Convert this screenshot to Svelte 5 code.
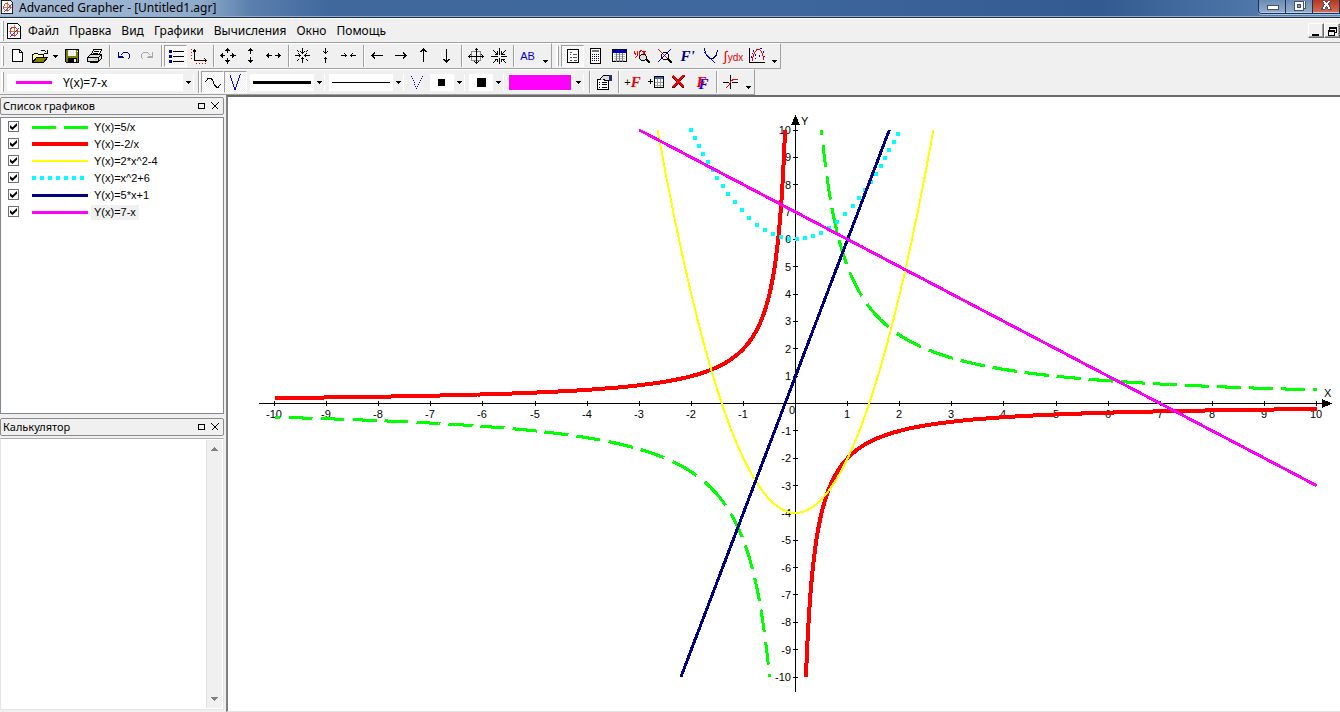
<script lang="ts">
    type Shape = { d: string; s?: string; f?: string; w?: number };

    const K = '#000';
    const N = '#000080';
    const R = '#f00000';

    const icons: Record<string, Shape[]> = {
        doc: [{ d: 'M3.5 1.5h7l3 3v9h-10z', s: K, f: '#fff' }, { d: 'M10.5 1.5v3h3', s: K }],
        open: [
            { d: 'M.5 14.5v-8h1l1-1h3l1 1h5v3', s: K, f: '#ffff99' },
            { d: 'M.5 14.5l4-5h11l-4 5z', s: K, f: '#808000' },
            { d: 'M8.5 3.5l1-1h3l2 2M15.5 2v3.5h-3.5', s: K }
        ],
        save: [
            { d: 'M1.5 1.5h13v13h-12l-1-1z', s: K, f: '#808000' },
            { d: 'M4 2h8v6h-8z', f: '#f0f0f0' },
            { d: 'M4 10h9v5h-9z', f: K },
            { d: 'M10 11h2v3h-2z', f: '#f0f0f0' },
            { d: 'M13 3h1v1h-1z', f: '#fff' }
        ],
        print: [
            { d: 'M4.5 6.5l2-5h8l-2 5', s: K, f: '#fff' },
            { d: 'M7 3.5h5M6 5.5h5', s: K },
            { d: 'M.5 9.5l3-3h11l-3 3zM.5 9.5h11v4h-11zM11.5 9.5l3-3v4l-3 3', s: K, f: '#dddddd' },
            { d: 'M2.5 14.5h8l3-3', s: K },
            { d: 'M7 11h3v1h-3z', f: '#d0c000' }
        ],
        undo: [{ d: 'M2.5 4v6M3 9.5h5M3 8.5h4M4.5 7.5l3-3h4l2 2v3l-2 2', s: N }],
        redo: [{ d: 'M13.5 4v6M13 9.5h-5M13 8.5h-4M11.5 7.5l-3-3h-4l-2 2v3l2 2', s: '#a8a8a8' }],
        list: [
            { d: 'M1 2h3v3h-3zM1 7h3v3h-3zM1 12h3v3h-3z', f: N },
            { d: 'M5 3.5h11M5 8.5h11M5 13.5h11', s: K }
        ],
        axes: [
            { d: 'M3.5 1v11M3 12.5h13M2 3.5h3M1.5 3.5l2-2l2 2M13.5 10.5l2 2l-2 2', s: K },
            { d: 'M0 1h1v1h-1zM0 4h1v1h-1zM0 7h1v1h-1zM0 10h1v1h-1zM5 15h1v1h-1zM8 15h1v1h-1zM11 15h1v1h-1zM14 15h1v1h-1z', f: R }
        ],
        grow: [{ d: 'M7.5 0v5M7.5 10v6M0 7.5h5M10 7.5h6M5.5 3l2-2l2 2M5.5 12l2 2l2-2M3 5.5l-2 2l2 2M12 5.5l2 2l-2 2', s: K }],
        growY: [{ d: 'M7.5 0v6M7.5 9v6M5.5 3l2-2l2 2M5.5 12l2 2l2-2', s: K }],
        growX: [{ d: 'M0 7.5h6M9 7.5h6M3 5.5l-2 2l2 2M12 5.5l2 2l-2 2', s: K }],
        shrink: [{ d: 'M7.5 0v6M7.5 9v6M0 7.5h6M9 7.5h6M5.5 3.5l2 2l2-2M5.5 11.5l2-2l2 2M3.5 5.5l2 2l-2 2M11.5 5.5l-2 2l2 2M2 2l2 2M13 2l-2 2M2 13l2-2M13 13l-2-2', s: K }],
        shrinkY: [{ d: 'M7.5 0v6M7.5 9v6M5.5 3.5l2 2l2-2M5.5 11.5l2-2l2 2', s: K }],
        shrinkX: [{ d: 'M0 7.5h6M9 7.5h6M3.5 5.5l2 2l-2 2M11.5 5.5l-2 2l2 2', s: K }],
        left: [{ d: 'M2 7.5h11M5 4.5l-3 3l3 3', s: K }],
        right: [{ d: 'M2 7.5h11M10 4.5l3 3l-3 3', s: K }],
        up: [{ d: 'M7.5 1v13M4.5 4l3-3l3 3', s: K }],
        down: [{ d: 'M7.5 1v13M4.5 11l3 3l3-3', s: K }],
        center: [
            { d: 'M3.5 3.5h9v9h-9z', s: '#888' },
            { d: 'M8.5 0v16M0 8.5h16M6.5 2.5l2-2l2 2M6.5 13.5l2 2l2-2M2.5 6.5l-2 2l2 2M13.5 6.5l2 2l-2 2', s: K }
        ],
        burst: [
            { d: 'M8.5 0v16M0 8.5h16M2 2l4 4M15 2l-4 4M2 15l4-4M15 15l-4-4', s: K },
            { d: 'M6.5 3v3h-3M10.5 3v3h3M6.5 14v-3h-3M10.5 14v-3h3', s: K },
            { d: 'M7 7h3v3h-3z', f: '#eee' }
        ],
        props: [
            { d: 'M2.5 1.5h11v13h-11z', s: K, f: '#fff' },
            { d: 'M5 4h2v1h-2zM5 6h1v1h-1zM8 6h4v1h-4zM5 9h2v1h-2zM8 9h4v1h-4zM5 12h2v1h-2zM9 12h3v1h-3z', f: '#555' }
        ],
        calc: [
            { d: 'M2.500 .5h10v15h-10z', s: K, f: '#fff' },
            { d: 'M4 2h7v2h-7z', f: '#777' },
            { d: 'M4 6h1v1h-1zM6 6h1v1h-1zM8 6h1v1h-1zM10 6h1v1h-1zM4 8h1v1h-1zM6 8h1v1h-1zM8 8h1v1h-1zM10 8h1v1h-1zM4 10h1v1h-1zM6 10h1v1h-1zM8 10h1v1h-1zM10 10h1v1h-1zM4 12h1v1h-1zM6 12h1v1h-1zM8 12h1v1h-1z', f: '#000090' },
            { d: 'M10 12h1v1h-1z', f: R }
        ],
        table: [
            { d: 'M1.5 1.5h14v12h-14z', s: K, f: '#fff' },
            { d: 'M2 2h13v3h-13z', f: '#0000c0' },
            { d: 'M3 6.5h11M3 8.5h11M3 10.5h11M3 12.5h11', s: '#bbb' },
            { d: 'M5.5 5v9M8.5 5v9M11.5 5v9', s: '#777' }
        ],
        lens: [
            { d: 'M0 3v1l2 3M3.5 3v4l-2 3M7.5 2l-2 2v4l2 2M8.5 3l3 4M11.5 3l-3 4', s: R },
            { d: 'M7.5 6.5h3l2 2v2l-2 2h-3l-2-2v-2z', s: K, f: '#ddd' },
            { d: 'M12 11l4 4', s: K, w: 2 }
        ],
        cross: [
            { d: 'M1 1l13 13', s: R },
            { d: 'M14 1l-13 13', s: '#0000e0' },
            { d: 'M6.5 4.5h3l2 2v3l-2 2h-3l-2-2v-3z', s: K },
            { d: 'M11 11l4 4', s: K, w: 2 }
        ],
        tangent: [
            { d: 'M1.5 0v2l2 5l3 3h4l3-3l1-5', s: N },
            { d: 'M1 4l11 11', s: '#0000ff' }
        ],
        regress: [
            { d: 'M.5 0v15M0 14.500h16', s: K },
            { d: 'M3.5 13v-3l2-5l3-4h2l2 3l2 5v3', s: R },
            { d: 'M2 8h1v2h-1zM4 2h1v2h-1zM6 6h1v2h-1zM11 0h2v1h-2zM14 3h1v2h-1zM10 7h1v2h-1zM15 8h1v1h-1zM6 10h1v1h-1zM3 5h1v1h-1z', f: '#0000e0' }
        ],
        wave: [{ d: 'M.5 8l3-4h2l2 2l2 5l2 2h2l2-3', s: K }],
        vee: [{ d: 'M2.5 1v2l1 2v1l1 2v1l1 2v1l1 2v1h1v-1l1-2v-1l1-2v-1l1-2v-1l1-2v-1l1-2', s: '#0000ff' }],
        veeDots: [{ d: 'M2 2h1v1h-1zM3 4h1v1h-1zM4 6h1v1h-1zM5 8h1v1h-1zM5 10h1v1h-1zM6 12h1v1h-1zM7 14h1v1h-1zM8 12h1v1h-1zM9 10h1v1h-1zM10 8h1v1h-1zM11 6h1v1h-1zM12 4h1v1h-1zM13 2h1v1h-1z', f: N }],
        hand: [
            { d: 'M1.5 5.5h11v10h-11z', s: K, f: '#fff' },
            { d: 'M3 8h1v1h-1zM6 8h5v1h-5zM3 10h1v1h-1zM6 10h5v1h-5zM3 13h1v1h-1zM6 13h5v1h-5z', f: K },
            { d: 'M4.5 5.5v-1l3-3h6v5h-4l-2-1', s: K, f: '#ddd' },
            { d: 'M13 1h3v6h-3z', f: '#203070' }
        ],
        addTable: [
            { d: 'M0 7.5h5M2.5 5v5', s: K },
            { d: 'M6.5 2.5h9v11h-9z', s: K, f: '#fff' },
            { d: 'M7 3h8v2h-8z', f: '#4060c0' },
            { d: 'M9.5 5v8M12.5 5v8M7 8.5h8M7 11.5h8', s: '#999' }
        ],
        remove: [
            { d: 'M2 3l11 11M13 2l-11 12', s: '#500', w: 2 },
            { d: 'M2 2l11 11M13 1l-11 12', s: R, w: 2 }
        ],
        trace: [
            { d: 'M7.5 1v14M0 8.5h6M9 8.5h6', s: K },
            { d: 'M3 14l3-3l2-4l3-2h4', s: R }
        ],
        app: [
            { d: 'M1.5 .5h10l3 3v12h-13z', s: K, f: '#fff' },
            { d: 'M8.5 2v12M3 8.5h11', s: '#d08020' },
            { d: 'M5.5 4.5h4l2 2v4l-2 2h-3l-2-2v-4z', s: '#e03030' },
            { d: 'M4 14l9-9', s: '#3030d0' }
        ]
    };

    const mainTools = [
        ['doc', 'open', 'save', 'print'],
        ['undo', 'redo'],
        ['list', 'axes'],
        ['grow', 'growY', 'growX'],
        ['shrink', 'shrinkY', 'shrinkX'],
        ['left', 'right', 'up', 'down'],
        ['center', 'burst']
    ];
    const calcTools = ['props', 'calc', 'table', 'lens', 'cross', 'F\'', 'tangent', 'ydx', 'regress'];

    const menu = ['Файл', 'Правка', 'Вид', 'Графики', 'Вычисления', 'Окно', 'Помощь'];

    type Graph = {
        name: string;
        color: string;
        width: number;
        dash?: [number, number];
        phase?: number;
        fn: (x: number) => number;
        ranges: [number, number][];
    };

    const r6 = Math.sqrt(7);
    const graphs: Graph[] = [
        { name: 'Y(x)=5/x', color: '#00ff00', width: 3, dash: [24, 8], phase: 18, fn: (x) => 5 / x, ranges: [[-10, -0.5], [0.5, 10]] },
        { name: 'Y(x)=-2/x', color: '#ff0000', width: 4, fn: (x) => -2 / x, ranges: [[-10, -0.2], [0.2, 10]] },
        { name: 'Y(x)=2*x^2-4', color: '#ffff00', width: 2, fn: (x) => 2 * x * x - 4, ranges: [[-r6, r6]] },
        { name: 'Y(x)=x^2+6', color: '#00ffff', width: 4, dash: [4, 4], fn: (x) => x * x + 6, ranges: [[-2, 2]] },
        { name: 'Y(x)=5*x+1', color: '#000080', width: 3, fn: (x) => 5 * x + 1, ranges: [[-2.2, 1.8]] },
        { name: 'Y(x)=7-x', color: '#ff00ff', width: 3, fn: (x) => 7 - x, ranges: [[-3, 10]] }
    ];

    let visible = $state(graphs.map(() => true));
    let selected = $state(5);

    const ox = 567.5;
    const oy = 306.5;
    const ux = 52.1;
    const uy = 27.35;

    // Dashes are counted along the longer of the two screen directions;
    // a dash as short as the pen is wide becomes an upright square dot.
    function curve(g: Graph) {
        let d = '';
        for (const [a, b] of g.ranges) {
            let run = g.phase ?? 0;
            let pen = false;
            let px = 0;
            let py = 0;
            const steps = g.dash ? 4000 : 400;
            for (let i = 0; i <= steps; i++) {
                const x = a + ((b - a) * i) / steps;
                const sx = ox + x * ux;
                const sy = oy - g.fn(x) * uy;
                if (i > 0) run += Math.max(Math.abs(sx - px), Math.abs(sy - py));
                const on = !g.dash || run % (g.dash[0] + g.dash[1]) < g.dash[0];
                if (g.dash?.[0] === g.width) {
                    if (on && !pen) d += `M${Math.round(sx) - 2} ${Math.round(sy)}h4`;
                } else if (on) {
                    d += `${pen ? 'L' : 'M'}${sx.toFixed(1)} ${sy.toFixed(1)}`;
                }
                pen = on;
                px = sx;
                py = sy;
            }
        }
        return d;
    }

    const ticks = Array.from({ length: 21 }, (_, i) => i - 10).filter((n) => n !== 0);
</script>

{#snippet icon(name: string)}
    <svg class="icon" viewBox="0 0 16 16" aria-hidden="true">
        {#each icons[name] as p}
            <path d={p.d} fill={p.f ?? 'none'} stroke={p.s ?? 'none'} stroke-width={p.w ?? 1} />
        {/each}
    </svg>
{/snippet}

{#snippet tri()}
    <svg class="tri" viewBox="0 0 5 3" aria-hidden="true"><path d="M0 0h5v1h-1v1h-1v1h-1v-1h-1v-1h-1z" /></svg>
{/snippet}

{#snippet paneHead(title: string)}
    <header class="pane-head">
        <h2>{title}</h2>
        <button aria-label="Закрепить"><svg viewBox="0 0 8 8"><path d="M1 1.5h6v5h-6z" /></svg></button>
        <button aria-label="Закрыть"><svg viewBox="0 0 8 8"><path d="M.5 .5l7 7M7.5 .5l-7 7" /></svg></button>
    </header>
{/snippet}

<div class="window">
    <header class="title-bar">
        {@render icon('app')}
        <h1>Advanced Grapher - [Untitled1.agr]</h1>
        <div class="win-buttons">
            <button aria-label="Свернуть"><svg viewBox="0 0 14 12"><path d="M1.5 4.5h11v4h-11z" /></svg></button>
            <button aria-label="Развернуть">
                <svg viewBox="0 0 14 12"><path d="M4.5 -1.5h8v9h-8z" /><path d="M1.5 .5h9v9h-9z" /><path class="hole" d="M4.5 3.5h3v3h-3z" /></svg>
            </button>
            <button class="close" aria-label="Закрыть окно">
                <svg viewBox="0 0 14 12"><path d="M1.5 -1.5h3l2 3l2-3h3l-3 5l3 5h-3l-2-3l-2 3h-3l3-5z" /></svg>
            </button>
        </div>
    </header>

    <nav class="menu-bar">
        <span class="grip"></span>
        {@render icon('app')}
        {#each menu as item}
            <button>{item}</button>
        {/each}
        <div class="mdi-buttons">
            <button aria-label="Свернуть документ"><svg viewBox="0 0 12 12"><path d="M2 9h7v2h-7z" /></svg></button>
            <button aria-label="Восстановить документ">
                <svg viewBox="0 0 12 12"><path d="M3 2h8v6h-2v3h-7v-6h1zM4 4v1h5v2h1v-3zM3 7v3h5v-3z" fill-rule="evenodd" /></svg>
            </button>
        </div>
    </nav>

    <div class="tool-row">
        <div class="toolbar">
            <span class="grip"></span>
            {#each mainTools as group}
                {#each group as name}
                    <button class="tool" class:pressed={name === 'list'} aria-label={name}>{@render icon(name)}</button>
                    {#if name === 'open'}
                        <button class="drop" aria-label="recent">{@render tri()}</button>
                    {/if}
                {/each}
                <span class="sep"></span>
            {/each}
            <button class="tool ab">AB</button>
            <button class="more" aria-label="more">{@render tri()}</button>
        </div>
        <div class="toolbar">
            <span class="grip"></span>
            {#each calcTools as name}
                <button class="tool" class:pressed={name === 'props'} aria-label={name}>
                    {#if name === "F'"}
                        <span class="f navy">F'</span>
                    {:else if name === 'ydx'}
                        <span class="ydx"><i>∫</i>ydx</span>
                    {:else}
                        {@render icon(name)}
                    {/if}
                </button>
            {/each}
            <button class="more" aria-label="more">{@render tri()}</button>
        </div>
    </div>

    <div class="tool-row">
        <div class="toolbar">
            <span class="grip"></span>
            <div class="combo graph-combo">
                <svg class="sample" viewBox="0 0 36 3"><path d="M0 1.5h36" stroke={graphs[selected].color} stroke-width="3" /></svg>
                <select bind:value={selected} aria-label="График">
                    {#each graphs as g, i}
                        <option value={i}>{g.name}</option>
                    {/each}
                </select>
                {@render tri()}
            </div>
            <span class="sep"></span>
            <button class="tool pressed" aria-label="curve">{@render icon('wave')}</button>
            <button class="tool pressed" aria-label="polyline">{@render icon('vee')}</button>
            <div class="combo line-combo">
                <span class="thick"></span>
                <select aria-label="Толщина"><option aria-label="3"></option></select>
                {@render tri()}
            </div>
            <div class="combo line-combo">
                <span class="thin"></span>
                <select aria-label="Стиль"><option aria-label="1"></option></select>
                {@render tri()}
            </div>
            <button class="tool" aria-label="points">{@render icon('veeDots')}</button>
            <div class="combo mark-combo">
                <span class="mark"></span>
                <select aria-label="Точка"><option aria-label="7"></option></select>
                {@render tri()}
            </div>
            <div class="combo mark-combo">
                <span class="mark big"></span>
                <select aria-label="Размер точки"><option aria-label="9"></option></select>
                {@render tri()}
            </div>
            <div class="combo color-combo">
                <span class="swatch" style:background={graphs[selected].color}></span>
                <select aria-label="Цвет"><option aria-label="magenta"></option></select>
                {@render tri()}
            </div>
            <span class="sep"></span>
            <button class="tool" aria-label="properties">{@render icon('hand')}</button>
            <span class="sep"></span>
            <button class="tool add-f"><b>+</b><span class="f red">F</span></button>
            <button class="tool" aria-label="add table">{@render icon('addTable')}</button>
            <button class="tool" aria-label="remove">{@render icon('remove')}</button>
            <button class="tool"><span class="f red shadowed">F</span></button>
            <span class="sep"></span>
            <button class="tool" aria-label="trace">{@render icon('trace')}</button>
            <button class="more" aria-label="more">{@render tri()}</button>
        </div>
    </div>

    <div class="body">
        <aside>
            {@render paneHead('Список графиков')}
            <ul class="graph-list">
                {#each graphs as g, i}
                    <li>
                        <label>
                            <input type="checkbox" bind:checked={visible[i]} />
                            <svg class="legend" viewBox="0 0 58 8" aria-hidden="true">
                                <path d="M1 4h56" stroke={g.color} stroke-width={g.width} stroke-dasharray={g.dash?.join(' ')} />
                            </svg>
                            <span class="graph-name" class:current={i === selected}>{g.name}</span>
                        </label>
                    </li>
                {/each}
            </ul>
            {@render paneHead('Калькулятор')}
            <div class="calculator">
                <textarea aria-label="Калькулятор"></textarea>
                <div class="scroll">
                    <svg viewBox="0 0 7 4"><path d="M0 4l3.5-4l3.5 4z" /></svg>
                    <svg viewBox="0 0 7 4"><path d="M0 0h7l-3.5 4z" /></svg>
                </div>
            </div>
        </aside>

        <main>
            <svg class="plot" viewBox="0 0 1112 614">
                <g class="axes">
                    <path d="M31 306.5h1064M567.5 28v567" />
                    <path class="head" d="M1094 302v9l10-4.500zM563 28h9l-4.500-10z" />
                    {#each ticks as n}
                        <path d={`M${Math.round(ox + n * ux - 0.5) + 0.5} 304v5M565 ${Math.round(oy - n * uy - 0.5) + 0.5}h5`} />
                    {/each}
                </g>
                <g class="labels">
                    {#each ticks as n}
                        <text x={Math.floor(ox + n * ux)} y="321" text-anchor="middle">{n}</text>
                        <text x="563" y={Math.round(oy - n * uy) + 4} text-anchor="end">{n}</text>
                    {/each}
                    <text x="561" y="317">0</text>
                    <text x="1096" y="300">X</text>
                    <text x="573" y="28">Y</text>
                </g>
                {#each graphs as g, i}
                    {#if visible[i]}
                        <path class="curve" d={curve(g)} stroke={g.color} stroke-width={g.width} />
                    {/if}
                {/each}
            </svg>
        </main>
    </div>
</div>

<style>
    :global(body) {
        background: #f0f0f0;
        font-family: 'Noto Sans', 'Open Sans', sans-serif;
        font-size: 12px;
        color: #000;
    }

    .window {
        display: flex;
        flex-direction: column;
        height: 100vh;
        overflow: hidden;
    }

    button {
        padding: 0;
        border: 0;
        background: none;
        font: inherit;
        color: inherit;
        display: flex;
        align-items: center;
        justify-content: center;
        flex: none;
    }

    svg {
        shape-rendering: crispEdges;
        display: block;
        flex: none;
    }

    .icon {
        width: 16px;
        height: 16px;
        overflow: visible;
    }

    .title-bar {
        display: flex;
        align-items: flex-start;
        box-sizing: border-box;
        height: 18px;
        flex: none;
        background: linear-gradient(90deg, #a9bfd9 0, #8eabcb 200px, #5b80ae 250px, #40689c 330px, #3f689e 750px, #345b91 1100px, #5d86b7 100%);
        border-bottom: 1px solid #1c2c40;
        box-shadow: inset 0 -1px #8fb0d4;
    }

    .title-bar .icon {
        width: 14px;
        height: 14px;
    }

    h1 {
        flex: 1;
        margin: 0 0 0 5px;
        font-size: 12px;
        line-height: 15px;
        font-weight: 400;
    }

    .win-buttons {
        display: flex;
        height: 13px;
        border: 1px solid #1e3352;
        border-width: 0 0 1px 1px;
        border-radius: 0 0 0 4px;
        overflow: hidden;
        box-shadow: 0 1px #a8c4e2;
    }

    .win-buttons button {
        width: 27px;
        height: 13px;
        background: linear-gradient(#6c8cb4, #93afd0);
        box-shadow: inset -1px 0 #1e3352, inset 0 -1px #b9cee6;
    }

    .win-buttons .close {
        background: linear-gradient(#b33622, #da7050);
    }

    .win-buttons svg {
        width: 14px;
        height: 12px;
        fill: #fff;
        stroke: #46526b;
    }

    .win-buttons .hole {
        fill: #7f9dc2;
    }

    .menu-bar {
        display: flex;
        align-items: center;
        box-sizing: border-box;
        height: 25px;
        flex: none;
        border-top: 1px solid #fff;
        border-bottom: 1px solid #a0a0a0;
    }

    .menu-bar > button {
        padding: 0 5px;
        height: 20px;
    }

    .menu-bar .icon {
        margin: 0 1px;
    }

    .grip {
        width: 2px;
        height: 20px;
        margin: 0 1px;
        border-right: 1px solid #a0a0a0;
        background: #fff;
        flex: none;
    }

    .mdi-buttons {
        display: flex;
        margin-left: auto;
    }

    .mdi-buttons button {
        width: 16px;
        height: 15px;
        border: 1px solid #fff;
        border-right-color: #696969;
        border-bottom-color: #696969;
        box-shadow: inset -1px -1px #a0a0a0;
    }

    .mdi-buttons svg {
        width: 12px;
        height: 12px;
    }

    .tool-row {
        display: flex;
        height: 26px;
        flex: none;
    }

    .toolbar {
        display: flex;
        align-items: center;
        box-sizing: border-box;
        height: 26px;
        border-right: 1px solid #a0a0a0;
        border-bottom: 1px solid #a0a0a0;
        border-top: 1px solid #fff;
    }

    .toolbar + .toolbar .grip {
        margin: 0 2px 0 4px;
    }

    .tool {
        box-sizing: border-box;
        width: 23px;
        height: 22px;
    }

    .pressed {
        background: repeating-conic-gradient(#fff 0 25%, #f0f0f0 0 50%) 0 0 / 2px 2px;
        border: 1px solid #fff;
        border-top-color: #a0a0a0;
        border-left-color: #a0a0a0;
    }

    .drop {
        width: 9px;
        height: 22px;
    }

    .tri {
        width: 5px;
        height: 3px;
    }

    .more {
        width: 12px;
        height: 22px;
        align-items: flex-end;
        padding-bottom: 4px;
        box-sizing: border-box;
    }

    .sep {
        box-sizing: border-box;
        width: 6px;
        height: 22px;
        flex: none;
        background: linear-gradient(90deg, transparent 3px, #a0a0a0 3px, #a0a0a0 4px, #fff 4px, #fff 5px, transparent 5px);
    }

    .ab {
        font-family: 'Liberation Sans', Arial, sans-serif;
        font-size: 11px;
        color: #0000d0;
    }

    .f {
        font: italic 700 15px 'Liberation Serif', serif;
    }

    .navy {
        color: #000080;
    }

    .red {
        color: #f00000;
    }

    .shadowed {
        text-shadow: 2px 2px #0000ff;
    }

    .ydx {
        font: 10px 'Liberation Sans', Arial, sans-serif;
        color: #e00000;
    }

    .ydx i {
        font-size: 14px;
        font-style: normal;
    }

    .add-f b {
        font: 11px 'Liberation Sans', sans-serif;
    }

    .combo {
        position: relative;
        display: flex;
        align-items: center;
        box-sizing: border-box;
        height: 17px;
        padding-right: 3px;
        background: linear-gradient(90deg, transparent calc(100% - 11px), #f0f0f0 calc(100% - 11px), #f0f0f0 calc(100% - 1px), transparent calc(100% - 1px)) #fff;
        flex: none;
    }

    .combo select {
        appearance: none;
        position: absolute;
        inset: 0;
        width: 100%;
        border: 0;
        padding: 0 0 0 56px;
        background: none;
        font: inherit;
        line-height: 17px;
        color: #000;
    }

    .combo .tri {
        margin-left: auto;
    }

    .graph-combo {
        width: 187px;
        margin: 0 1px 0 2px;
    }

    .sample {
        width: 36px;
        height: 3px;
        margin-left: 9px;
    }

    .line-combo {
        width: 75px;
        margin: 0 1px 0 3px;
    }

    .thick,
    .thin {
        width: 58px;
        height: 3px;
        margin-left: 3px;
        background: #000;
    }

    .thin {
        height: 1px;
    }

    .mark-combo {
        width: 35px;
        margin: 0 2px;
    }

    .mark {
        width: 7px;
        height: 7px;
        margin-left: 8px;
        background: #000;
    }

    .mark.big {
        width: 9px;
        height: 9px;
    }

    .color-combo {
        width: 76px;
        margin: 0 2px;
    }

    .swatch {
        width: 62px;
        height: 15px;
        margin-left: 1px;
    }

    .body {
        display: flex;
        flex: 1;
        min-height: 0;
    }

    aside {
        display: flex;
        flex-direction: column;
        box-sizing: border-box;
        width: 226px;
        flex: none;
        padding: 2px 2px 2px 0;
    }

    .pane-head {
        display: flex;
        align-items: center;
        box-sizing: border-box;
        height: 18px;
        flex: none;
        padding: 0 1px 0 2px;
        border: 1px solid #8c8c8c;
        border-radius: 2px;
    }

    .pane-head h2 {
        flex: 1;
        margin: 0;
        font-size: 11px;
        line-height: 16px;
        font-weight: 400;
    }

    .pane-head button {
        width: 14px;
        height: 14px;
    }

    .pane-head svg {
        width: 8px;
        height: 8px;
        fill: none;
        stroke: #000;
    }

    .graph-list {
        box-sizing: border-box;
        flex: 12 1 0;
        margin: 2px 0 4px;
        padding: 0 0 0 7px;
        list-style: none;
        background: #fff;
        border: 1px solid #828790;
        overflow: hidden;
    }

    .graph-list label {
        display: flex;
        align-items: center;
        height: 17px;
        font: 11px 'Liberation Sans', Arial, sans-serif;
    }

    input[type='checkbox'] {
        appearance: none;
        position: relative;
        box-sizing: border-box;
        width: 11px;
        height: 11px;
        margin: 0 12px 0 0;
        border: 1px solid #707070;
        background: #fff;
    }

    input[type='checkbox']:checked::before {
        content: '';
        position: absolute;
        inset: 1px;
        background: #000;
        clip-path: polygon(0 30%, 35% 60%, 100% 0, 100% 40%, 35% 100%, 0 70%);
    }

    .legend {
        width: 58px;
        height: 8px;
    }

    .graph-name {
        margin: 2px 0 0 2px;
        padding: 0 3px;
        line-height: 15px;
    }

    .graph-name.current {
        background: #f0f0f0;
    }

    .calculator {
        display: flex;
        box-sizing: border-box;
        flex: 11 1 0;
        margin-top: 2px;
        min-height: 0;
        border: 1px solid #e3e3ec;
        border-top-color: #abadb3;
        background: #fff;
    }

    textarea {
        flex: 1;
        min-width: 0;
        resize: none;
        border: 0;
        padding: 2px;
        outline: 0;
        font: inherit;
    }

    .scroll {
        display: flex;
        flex-direction: column;
        justify-content: space-between;
        align-items: center;
        width: 16px;
        margin: 1px;
        padding: 7px 0;
        box-sizing: border-box;
        background: #f0f0f0;
        border-left: 1px solid #e3e3e3;
    }

    .scroll svg {
        width: 7px;
        height: 4px;
        fill: #808080;
    }

    main {
        flex: 1;
        min-width: 0;
        box-sizing: border-box;
        background: #fff;
        border-style: solid;
        border-width: 2px 0 1px 2px;
        border-color: #696969 #fff #e3e3e3 #808080;
        overflow: hidden;
    }

    .plot {
        width: 100%;
        height: 100%;
    }

    .axes path {
        fill: none;
        stroke: #000;
    }

    .axes .head {
        fill: #000;
        stroke: none;
    }

    .labels {
        font: 11px 'Liberation Sans', Arial, sans-serif;
    }

    .curve {
        fill: none;
    }
</style>
